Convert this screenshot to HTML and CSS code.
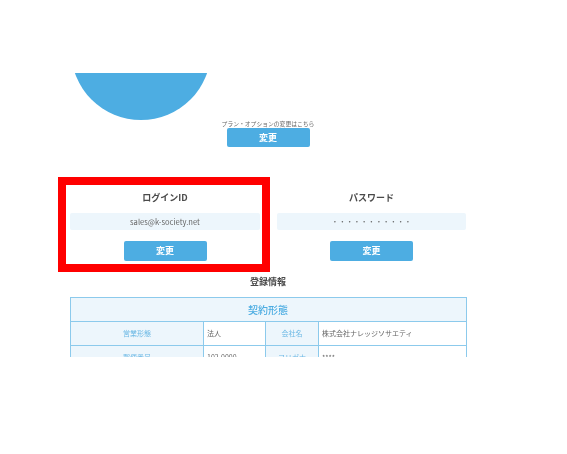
FILE: index.html
```html
<!DOCTYPE html>
<html lang="ja">
<head>
<meta charset="utf-8">
<title>登録情報</title>
<link rel="stylesheet" href="styles.css">
</head>
<body>
<main class="view">
  <div class="content">
    <div class="avatar"></div>
    <section class="plan">
      <p class="plan-note">プラン・オプションの変更はこちら</p>
      <button class="btn">変更</button>
    </section>
    <section class="creds">
      <div class="cred">
        <h2 class="cred-title">ログインID</h2>
        <div class="cred-value">sales@k-society.net</div>
        <button class="btn">変更</button>
      </div>
      <div class="cred">
        <h2 class="cred-title">パスワード</h2>
        <div class="cred-value cred-dots">・・・・・・・・・・・</div>
        <button class="btn">変更</button>
      </div>
    </section>
    <h2 class="reg-title">登録情報</h2>
    <section class="table">
      <div class="table-head">契約形態</div>
      <div class="row">
        <div class="label">営業形態</div>
        <div class="val">法人</div>
        <div class="label">会社名</div>
        <div class="val">株式会社ナレッジソサエティ</div>
      </div>
      <div class="row">
        <div class="label">郵便番号</div>
        <div class="val">102-0000</div>
        <div class="label">フリガナ</div>
        <div class="val">****</div>
      </div>
    </section>
  </div>
  <div class="highlight"></div>
</main>
</body>
</html>
```

FILE: styles.css
```css
* { box-sizing: border-box; }
html, body { margin: 0; background: #fff; }
body {
  padding-top: 73px;
  height: 454px;
  overflow: hidden;
  font-family: "Noto Sans CJK JP", "Noto Sans", sans-serif;
  color: #555;
}
.view {
  position: relative;
  height: 284px;
  overflow: hidden;
}
.content {
  width: 397px;
  margin-left: 70px;
  display: flex;
  flex-direction: column;
  filter: blur(0.35px);
}
.avatar {
  width: 140px;
  height: 140px;
  margin: -93.5px 0 0 1px;
  border-radius: 50%;
  background: #4dade2;
}
.plan {
  display: flex;
  flex-direction: column;
  align-items: center;
  padding-right: 1px;
}
.plan-note {
  margin: 0;
  font-size: 5.8px;
  line-height: 8.5px;
  height: 8.5px;
  color: #666;
}
.btn {
  display: block;
  width: 83px;
  height: 20px;
  padding: 0;
  border: 0;
  border-radius: 2px;
  background: #4dade2;
  color: #fff;
  font-family: inherit;
  font-size: 9px;
  font-weight: 700;
  line-height: 20px;
}
.plan .btn { height: 19px; }
.creds {
  display: grid;
  grid-template-columns: 190px 189px;
  column-gap: 17px;
  margin-top: 39px;
}
.cred {
  display: flex;
  flex-direction: column;
  align-items: center;
}
.cred-title {
  margin: 0;
  height: 27px;
  font-size: 9px;
  line-height: 24px;
  font-weight: 700;
  color: #4a4a4a;
}
.cred-value {
  width: 100%;
  height: 17px;
  margin-bottom: 11px;
  border-radius: 2px;
  background: #edf6fc;
  font-size: 7.6px;
  line-height: 17px;
  text-align: center;
  color: #666;
}
.cred-dots { font-size: 7.3px; }
.reg-title {
  margin: 12px 0 0;
  padding-right: 1px;
  height: 24px;
  font-size: 9px;
  line-height: 18px;
  font-weight: 700;
  text-align: center;
  color: #4a4a4a;
}
.table {
  border: 1px solid #8ccaec;
  border-bottom: 0;
}
.table-head {
  height: 24px;
  padding-right: 1px;
  border-bottom: 1px solid #8ccaec;
  background: #edf6fc;
  color: #4dade2;
  font-size: 10px;
  font-weight: 500;
  line-height: 24px;
  text-align: center;
}
.row {
  display: grid;
  grid-template-columns: 133px 62px 53px 1fr;
  height: 24px;
  border-bottom: 1px solid #8ccaec;
}
.label {
  background: #edf6fc;
  border-right: 1px solid #8ccaec;
  color: #6bb8e4;
  font-size: 7px;
  line-height: 23px;
  text-align: center;
}
.val {
  border-right: 1px solid #8ccaec;
  padding-left: 3px;
  font-size: 7px;
  line-height: 23px;
  color: #666;
}
.val:last-child { border-right: 0; }
.highlight {
  position: absolute;
  left: 58px;
  top: 104px;
  width: 212px;
  height: 95px;
  border: 8px solid #f00;
}
```
